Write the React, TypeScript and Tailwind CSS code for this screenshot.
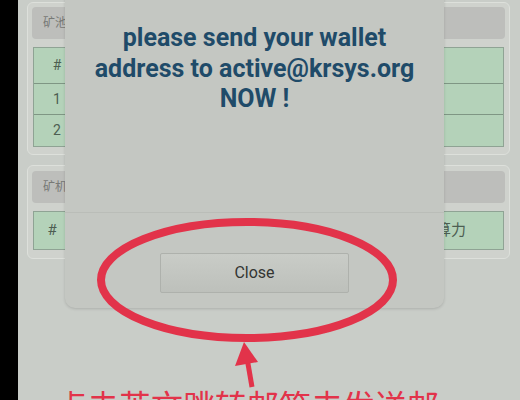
import React from "react";

const cjk = "font-['Roboto','Noto_Sans_CJK_SC',sans-serif]";

function Card1() {
  return (
    <div className="h-[153px] shrink-0 rounded-[6px] border border-[#dde0db] bg-[#cfd2cd] px-[4px] pt-[4px] pb-[5px] flex flex-col gap-[8px]">
      <div className={`h-[32px] shrink-0 rounded-[4px] bg-[#bdbebb] px-[11px] flex items-center text-[12px] text-[#777976] ${cjk}`}>
        矿池信息
      </div>
      <div className={`mx-[1px] border border-[#8fa394] bg-[#b4d2b9] flex flex-col text-[14px] text-[#4d5e52] ${cjk}`}>
        <div className="h-[36px] flex items-center border-b border-[#7f9684]">
          <div className="w-[46px] text-center">#</div>
          <div className="flex-1 text-center">矿池地址</div>
          <div className="w-[160px] pr-[80px] text-center">状态</div>
        </div>
        <div className="h-[31px] flex items-center border-b border-[#7f9684]">
          <div className="w-[46px] text-center">1</div>
          <div className="flex-1 text-center">stratum</div>
          <div className="w-[160px] pr-[80px] text-center">正常</div>
        </div>
        <div className="h-[31px] flex items-center">
          <div className="w-[46px] text-center">2</div>
          <div className="flex-1 text-center">stratum</div>
          <div className="w-[160px] pr-[80px] text-center">正常</div>
        </div>
      </div>
    </div>
  );
}

function Card2() {
  return (
    <div className="h-[94px] shrink-0 rounded-[6px] border border-[#dde0db] bg-[#cfd2cd] px-[4px] pt-[5px] pb-[7px] flex flex-col gap-[8px]">
      <div className={`h-[32px] shrink-0 rounded-[4px] bg-[#bdbebb] px-[11px] flex items-center text-[12px] text-[#777976] ${cjk}`}>
        矿机列表
      </div>
      <div className={`mx-[1px] h-[39px] border border-[#8fa394] bg-[#b4d2b9] flex items-center text-[15px] text-[#4d5e52] ${cjk}`}>
        <div className="w-[36px] text-center">#</div>
        <div className="flex-1 text-center">矿机名称</div>
        <div className="w-[100px] text-center">状态</div>
        <div className="w-[104px] text-center">算力</div>
      </div>
    </div>
  );
}

export default function App() {
  return (
    <div className="relative w-[520px] h-[400px] overflow-hidden flex bg-[#c9cdc8]">
      <div className="w-[18px] shrink-0 bg-black" />
      <div className="flex-1 flex flex-col pt-[2px] pl-[9px] pr-[10px] gap-[10px]">
        <Card1 />
        <Card2 />
      </div>

      {/* Modal dialog */}
      <div className="absolute left-[65px] top-[-10px] w-[379px] h-[318px] rounded-b-[10px] bg-[#c4c7c2] shadow-[0_1px_3px_rgba(0,0,0,0.15)] flex flex-col">
        <div className="pt-[33px] text-center text-[25px] leading-[30.5px] font-bold text-[#1f4b69] font-['Roboto',sans-serif]">
          please send your wallet
          <br />
          address to active@krsys.org
          <br />
          NOW !
        </div>
        <div className="mt-auto border-t border-[#babdb8] pt-[40px] pb-[15px] flex justify-center">
          <div className="w-[189px] h-[40px] rounded-[2px] border border-[#aeb1ac] bg-gradient-to-b from-[#c9ccc7] to-[#bdc0bb] flex items-center justify-center text-[16px] text-[#333533] font-['Roboto',sans-serif]">
            Close
          </div>
        </div>
      </div>

      {/* Red annotation */}
      <svg className="absolute left-0 top-0 pointer-events-none" width="520" height="400" viewBox="0 0 520 400">
        <ellipse cx="247" cy="280" rx="146" ry="58" fill="none" stroke="#e2334a" strokeWidth="8" />
        <line x1="252" y1="387" x2="247" y2="358" stroke="#e2334a" strokeWidth="5" />
        <polygon points="244,342 235,366 258,362" fill="#e2334a" />
      </svg>
      <div className="absolute left-[55px] top-[384px] w-[400px] text-[32px] leading-[40px] text-[#e2334a] font-['Noto_Sans_CJK_SC',sans-serif]">
        点击英文跳转邮箱去发送邮件
      </div>
    </div>
  );
}
